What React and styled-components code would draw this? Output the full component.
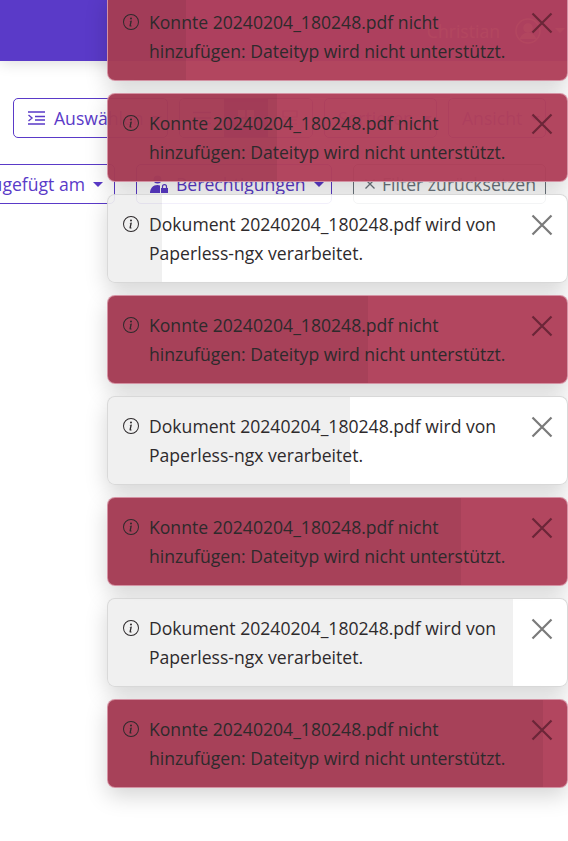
import React from 'react'
import styled, { createGlobalStyle } from 'styled-components'

const Global = createGlobalStyle`
  html, body { margin: 0; padding: 0; background: #fff; }
  body { font-family: "Open Sans", "Noto Sans", sans-serif; overflow: hidden; height: 841px; }
  * { box-sizing: border-box; }
  svg { flex: none; }
`

const toasts = [
  { kind: 'error', progress: 78 },
  { kind: 'error', progress: 169 },
  { kind: 'info', progress: 54 },
  { kind: 'error', progress: 260 },
  { kind: 'info', progress: 242 },
  { kind: 'error', progress: 353 },
  { kind: 'info', progress: 405 },
  { kind: 'error', progress: 435 },
]

const messages = {
  error: ['Konnte 20240204_180248.pdf nicht', 'hinzufügen: Dateityp wird nicht unterstützt.'],
  info: ['Dokument 20240204_180248.pdf wird von', 'Paperless-ngx verarbeitet.'],
}

function InfoIcon() {
  return (
    <svg width="16" height="16" viewBox="0 0 16 16" fill="currentColor">
      <path d="M8 15A7 7 0 1 1 8 1a7 7 0 0 1 0 14zm0 1A8 8 0 1 0 8 0a8 8 0 0 0 0 16z" />
      <path d="m8.93 6.588-2.29.287-.082.38.45.083c.294.07.352.176.288.469l-.738 3.468c-.194.897.105 1.319.808 1.319.545 0 1.178-.252 1.465-.598l.088-.416c-.2.176-.492.246-.686.246-.275 0-.375-.193-.304-.533L8.93 6.588zM9 4.5a1 1 0 1 1-2 0 1 1 0 0 1 2 0z" />
    </svg>
  )
}

function SelectIcon() {
  return (
    <svg width="19" height="16" viewBox="0 0 19 16" fill="none" stroke="currentColor" strokeWidth="1.4">
      <path d="M1 2h17M8 6.500h10M8 10h10M1 14h17M1.500 5 5 8l-3.500 3" />
    </svg>
  )
}

function PermissionIcon() {
  return (
    <svg width="18" height="18" viewBox="0 0 18 18" fill="currentColor">
      <circle cx="7.500" cy="4.500" r="4" />
      <path d="M0 18c0-4.500 3-8 7.500-8 1 0 1.800.2 2.500.5V18z" />
      <path d="M11 13h7v5h-7z" />
      <path d="M12.500 13v-1.300a2 2 0 0 1 4 0V13" fill="none" stroke="currentColor" strokeWidth="1.200" />
    </svg>
  )
}

function ListIcon() {
  return (
    <svg width="18" height="14" viewBox="0 0 18 14" stroke="currentColor" strokeWidth="1.300">
      <path d="M0 1.500h18M0 7h18M0 12.500h18" />
    </svg>
  )
}

function GridIcon() {
  return (
    <svg width="16" height="16" viewBox="0 0 16 16" fill="currentColor">
      <path d="M0 0h7v7H0zM9 0h7v7H9zM0 9h7v7H0zM9 9h7v7H9z" />
    </svg>
  )
}

function CardIcon() {
  return (
    <svg width="16" height="16" viewBox="0 0 16 16" fill="none" stroke="currentColor" strokeWidth="1.200">
      <path d="M1 1h14v6H1zM1 10h14M1 14h14" />
    </svg>
  )
}

function UserIcon() {
  return (
    <svg width="26" height="26" viewBox="0 0 26 26" fill="none" stroke="currentColor" strokeWidth="1.500">
      <circle cx="13" cy="13" r="12" />
      <circle cx="13" cy="10" r="4" fill="currentColor" />
      <path d="M5.500 21c1.500-4 4-5.500 7.500-5.500s6 1.500 7.500 5.500" fill="currentColor" />
    </svg>
  )
}

export default function App() {
  return (
    <>
      <Global />
      <Page>
        <Header>
          <UserName>Christian</UserName>
          <UserIcon />
          <Caret />
        </Header>
        <Toolbar>
          <Button $w={155}>
            <SelectIcon />
            Auswählen
            <Caret />
          </Button>
          <ButtonGroup>
            <GroupPart><ListIcon /></GroupPart>
            <GroupPart $active><GridIcon /></GroupPart>
            <GroupPart><CardIcon /></GroupPart>
          </ButtonGroup>
          <Button $w={113}>Sortieren<Caret /></Button>
          <Button $w={98}>Ansicht<Caret /></Button>
        </Toolbar>
        <FilterBar>
          <Button $w={175} $end>Hinzugefügt am<Caret /></Button>
          <Button $w={196}>
            <PermissionIcon />
            Berechtigungen
            <Caret />
          </Button>
          <ResetButton $w={193}>
            <svg width="10" height="10" viewBox="0 0 10 10" stroke="currentColor" strokeWidth="1.300">
              <path d="M.5.500l9 9M9.500.500l-9 9" />
            </svg>
            Filter zurücksetzen
          </ResetButton>
        </FilterBar>
        <ToastStack>
          {toasts.map((t, i) => (
            <Toast key={i} $kind={t.kind}>
              <Progress style={{ width: t.progress }} />
              <IconSlot><InfoIcon /></IconSlot>
              <Message>
                <div>{messages[t.kind][0]}</div>
                <div>{messages[t.kind][1]}</div>
              </Message>
              <Close $kind={t.kind}>
                <svg width="22" height="22" viewBox="0 0 22 22" stroke="currentColor" strokeWidth="2.200">
                  <path d="M1.500 1.500l19 19M20.500 1.500l-19 19" />
                </svg>
              </Close>
            </Toast>
          ))}
        </ToastStack>
      </Page>
    </>
  )
}

const Page = styled.div`
  position: relative;
  width: 568px;
  height: 841px;
  overflow: hidden;
`

const Header = styled.header`
  height: 61px;
  background: #5a3ac8;
  box-shadow: 0 2px 14px rgba(0, 0, 0, 0.14);
  display: flex;
  align-items: center;
  justify-content: flex-end;
  padding: 0 3px 0 0;
  gap: 14px;
  color: #fff;
`

const UserName = styled.span`
  font-size: 17.6px;
  margin-right: 1px;
`

const Toolbar = styled.div`
  display: flex;
  gap: 11px;
  margin-top: 37px;
  padding-left: 13px;
`

const FilterBar = styled.div`
  display: flex;
  gap: 21px;
  margin-top: 26px;
  margin-left: -60px;
`

const Button = styled.div`
  flex: 0 0 ${p => p.$w}px;
  min-width: 0;
  height: 40px;
  display: flex;
  align-items: center;
  justify-content: ${p => (p.$end ? 'flex-end' : 'flex-start')};
  gap: 8px;
  padding: 0 11px 0 13px;
  border: 1px solid #5a3ac8;
  border-radius: 5px;
  color: #5a3ac8;
  font-size: 17.6px;
  white-space: nowrap;
  background: #fff;
`

const ButtonGroup = styled.div`
  display: flex;
  flex: 0 0 134px;
  height: 40px;
  border: 1px solid #5a3ac8;
  border-radius: 5px;
  overflow: hidden;
`

const GroupPart = styled.div`
  flex: 1;
  display: flex;
  align-items: center;
  justify-content: center;
  color: ${p => (p.$active ? '#fff' : '#5a3ac8')};
  background: ${p => (p.$active ? '#5a3ac8' : '#fff')};
`

const ResetButton = styled(Button)`
  gap: 7px;
  padding-left: 11px;
  border-color: #6c757d;
  color: #6c757d;
`

const Caret = styled.span`
  flex: none;
  width: 0;
  height: 0;
  border-left: 5px solid transparent;
  border-right: 5px solid transparent;
  border-top: 5px solid currentColor;
`

const ToastStack = styled.div`
  position: absolute;
  top: -8px;
  right: 0;
  width: 461px;
  display: flex;
  flex-direction: column;
  gap: 12px;
`

const Toast = styled.div`
  position: relative;
  height: 89px;
  display: flex;
  padding: 21px 14px 0 15px;
  border: 1px solid ${p => (p.$kind === 'error' ? 'rgba(235, 200, 210, 0.6)' : 'rgba(0, 0, 0, 0.15)')};
  border-radius: 8px;
  overflow: hidden;
  background: ${p => (p.$kind === 'error' ? 'rgba(176, 64, 90, 0.97)' : 'rgba(255, 255, 255, 0.92)')};
  color: #2e2a2c;
  box-shadow: 0 8px 22px rgba(0, 0, 0, 0.17);
  font-size: 17.6px;
  line-height: 28.6px;
`

const Progress = styled.div`
  position: absolute;
  left: 0;
  top: 0;
  bottom: 0;
  background: rgba(0, 0, 0, 0.06);
`

const IconSlot = styled.div`
  position: relative;
  flex: 0 0 26px;
  margin-top: -5px;
  height: 18px;
`

const Message = styled.div`
  position: relative;
  flex: 1;
  margin-top: -6px;
  white-space: nowrap;
`

const Close = styled.div`
  position: relative;
  flex: 0 0 22px;
  margin-top: -2px;
  color: ${p => (p.$kind === 'error' ? '#6b2638' : '#7a7a7a')};
`
